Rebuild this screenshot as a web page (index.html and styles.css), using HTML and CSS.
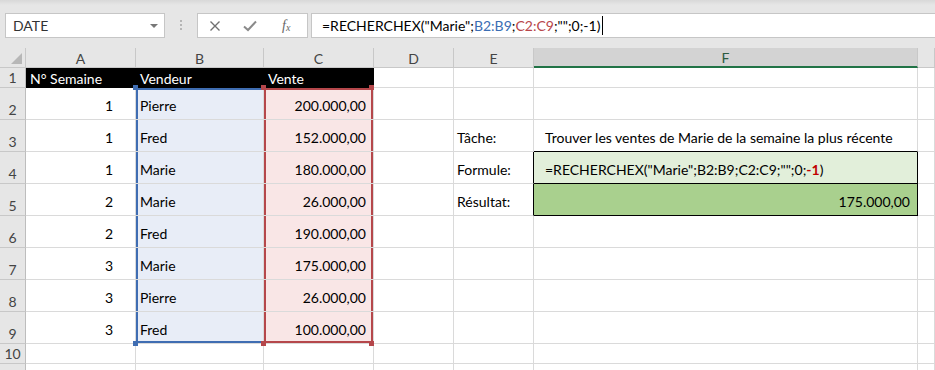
FILE: index.html
```html
<!DOCTYPE html>
<html>
<head>
	<meta charset="utf-8">
	<meta name="viewport" content="width=device-width, initial-scale=1">
	<title>RECHERCHEX - Excel</title>
	<link rel="stylesheet" href="styles.css">
</head>
<body>
	<!-- Formula bar -->
	<div class="formula-bar">
		<div class="name-box">
			<span>DATE</span>
			<span class="drop"></span>
		</div>
		<div class="grip"><i></i><i></i><i></i></div>
		<div class="fx-buttons">
			<svg class="ico x" width="12" height="12" viewBox="0 0 12 12"><path d="M1.5 1.5 L10.5 10.5 M10.5 1.5 L1.5 10.5" stroke="#707070" stroke-width="1.4" fill="none"/></svg>
			<svg class="ico check" width="14" height="12" viewBox="0 0 14 12"><path d="M1 6.5 L5 10 L13 1.5" stroke="#8a8a8a" stroke-width="2" fill="none"/></svg>
			<span class="fx">f<sub>x</sub></span>
		</div>
		<div class="formula-input">
			<span>=RECHERCHEX("Marie";<span class="ref-b">B2:B9</span>;<span class="ref-c">C2:C9</span>;"";0;-1)</span><span class="caret"></span>
		</div>
	</div>

	<!-- Sheet -->
	<table class="sheet">
		<colgroup>
			<col class="w-head">
			<col class="w-a">
			<col class="w-b">
			<col class="w-c">
			<col class="w-d">
			<col class="w-e">
			<col class="w-f">
			<col>
		</colgroup>
		<tr class="h-small">
			<th class="corner"><span class="tri"></span></th>
			<th class="col-head">A</th>
			<th class="col-head">B</th>
			<th class="col-head">C</th>
			<th class="col-head">D</th>
			<th class="col-head">E</th>
			<th class="col-head active">F</th>
			<th class="col-head blank"></th>
		</tr>
		<tr class="h-small">
			<th class="row-head">1</th>
			<td class="title">N° Semaine</td>
			<td class="title">Vendeur</td>
			<td class="title">Vente</td>
			<td></td><td></td><td></td><td></td>
		</tr>
		<tr class="h-big">
			<th class="row-head">2</th>
			<td class="num week">1</td>
			<td class="rng-b top"><span class="handle h-tl blue"></span>Pierre</td>
			<td class="rng-c top num"><span class="handle h-tl red"></span><span class="handle h-tr red"></span>200.000,00</td>
			<td></td><td></td><td></td><td></td>
		</tr>
		<tr class="h-big">
			<th class="row-head">3</th>
			<td class="num week">1</td>
			<td class="rng-b">Fred</td>
			<td class="rng-c num">152.000,00</td>
			<td></td>
			<td class="label">Tâche:</td>
			<td class="task box-top">Trouver les ventes de Marie de la semaine la plus récente</td>
			<td></td>
		</tr>
		<tr class="h-big">
			<th class="row-head">4</th>
			<td class="num week">1</td>
			<td class="rng-b">Marie</td>
			<td class="rng-c num">180.000,00</td>
			<td></td>
			<td class="label box-left">Formule:</td>
			<td class="task formula box">=RECHERCHEX("Marie";B2:B9;C2:C9;"";0;<b>-1</b>)</td>
			<td></td>
		</tr>
		<tr class="h-big">
			<th class="row-head">5</th>
			<td class="num week">2</td>
			<td class="rng-b">Marie</td>
			<td class="rng-c num">26.000,00</td>
			<td></td>
			<td class="label box-left">Résultat:</td>
			<td class="num result box">175.000,00</td>
			<td></td>
		</tr>
		<tr class="h-big">
			<th class="row-head">6</th>
			<td class="num week">2</td>
			<td class="rng-b">Fred</td>
			<td class="rng-c num">190.000,00</td>
			<td></td><td></td><td></td><td></td>
		</tr>
		<tr class="h-big">
			<th class="row-head">7</th>
			<td class="num week">3</td>
			<td class="rng-b">Marie</td>
			<td class="rng-c num">175.000,00</td>
			<td></td><td></td><td></td><td></td>
		</tr>
		<tr class="h-big">
			<th class="row-head">8</th>
			<td class="num week">3</td>
			<td class="rng-b">Pierre</td>
			<td class="rng-c num">26.000,00</td>
			<td></td><td></td><td></td><td></td>
		</tr>
		<tr class="h-big">
			<th class="row-head">9</th>
			<td class="num week">3</td>
			<td class="rng-b bottom"><span class="handle h-bl blue"></span>Fred</td>
			<td class="rng-c bottom num"><span class="handle h-bl red"></span><span class="handle h-br red"></span>100.000,00</td>
			<td></td><td></td><td></td><td></td>
		</tr>
		<tr class="h-small">
			<th class="row-head">10</th>
			<td></td><td></td><td></td><td></td><td></td><td></td><td></td>
		</tr>
		<tr class="h-small">
			<th class="row-head"></th>
			<td></td><td></td><td></td><td></td><td></td><td></td><td></td>
		</tr>
	</table>
</body>
</html>
```

FILE: styles.css
```css
/* General */
* {
	box-sizing: border-box;
}

body {
	margin: 0;
	background: #fff;
	font-family: Lato, "Open Sans", sans-serif;
	overflow: hidden;
}

/* Formula bar */
.formula-bar {
	display: flex;
	align-items: flex-start;
	height: 48px;
	padding: 13px 0 0 5px;
	background: linear-gradient(#d8d8d8, #e6e6e6 5px);
}

.name-box {
	display: flex;
	align-items: center;
	justify-content: space-between;
	width: 160px;
	height: 25px;
	padding: 0 6px 0 7px;
	background: #fff;
	border: 1px solid #c6c6c6;
	font-size: 14px;
	color: #333;
}

.drop {
	border-left: 4px solid transparent;
	border-right: 4px solid transparent;
	border-top: 4px solid #777;
}

.grip {
	display: flex;
	flex-direction: column;
	align-items: center;
	gap: 2px;
	width: 32px;
	padding-top: 7px;
}

.grip i {
	width: 2px;
	height: 2px;
	background: #b5b5b5;
}

.fx-buttons {
	display: flex;
	align-items: center;
	width: 111px;
	height: 25px;
	padding-left: 11px;
	background: #fff;
	border: 1px solid #c6c6c6;
}

.check {
	margin-left: 22px;
}

.fx {
	margin-left: 25px;
	font-family: "Liberation Serif", serif;
	font-style: italic;
	font-size: 14px;
	color: #666;
}

.fx sub {
	font-size: 10px;
	vertical-align: -1px;
}

.formula-input {
	display: flex;
	align-items: center;
	flex: 1;
	height: 25px;
	margin-left: 3px;
	padding-left: 10px;
	background: #fff;
	border: 1px solid #c6c6c6;
	border-right: none;
	font-size: 14px;
	color: #000;
}

.ref-b {
	color: #3a6db3;
}

.ref-c {
	color: #b8464a;
}

.caret {
	width: 1px;
	height: 19px;
	margin-left: 2px;
	background: #000;
}

/* Sheet */
.sheet {
	width: 935px;
	table-layout: fixed;
	border-collapse: separate;
	border-spacing: 0;
	font-size: 14px;
}

.w-head { width: 26px; }
.w-a { width: 110px; }
.w-b { width: 128px; }
.w-c { width: 110px; }
.w-d { width: 80px; }
.w-e { width: 80px; }
.w-f { width: 384px; }

.h-small { height: 20px; }
.h-big { height: 32px; }

th, td {
	padding: 0 4px;
	border-right: 1px solid #dadada;
	border-bottom: 1px solid #dadada;
	white-space: nowrap;
	overflow: visible;
}

td {
	position: relative;
	padding-top: 4px;
	color: #000;
	text-align: left;
	vertical-align: middle;
}

/* Headers */
.corner, .col-head, .row-head {
	background: #e6e6e6;
	font-weight: normal;
	font-size: 14px;
	color: #444;
	border-color: #c8c8c8;
}

.col-head {
	padding-top: 1px;
	text-align: center;
}

.col-head.active {
	background: #d3d3d3;
	color: #2c5a3f;
	border-bottom: 2px solid #217346;
}

.corner {
	position: relative;
	padding: 0;
}

.tri {
	position: absolute;
	right: 3px;
	bottom: 3px;
	border-left: 11px solid transparent;
	border-bottom: 11px solid #b7b7b7;
}

.row-head {
	padding: 0;
	text-align: center;
	vertical-align: bottom;
	border-right-color: #bdbdbd;
	line-height: 19px;
}

/* Cells */
.title {
	background: #000;
	color: #fff;
	border-color: #000;
	padding-top: 1px;
}

.num {
	text-align: right;
	padding-right: 7px;
}

.week {
	padding-right: 22px;
}

.rng-b {
	background: #e8edf7;
	box-shadow: inset 2px 0 #3f6db2;
}

.rng-b.top { box-shadow: inset 2px 0 #3f6db2, inset 0 2px #3f6db2; }
.rng-b.bottom { box-shadow: inset 2px 0 #3f6db2, inset 0 -2px #3f6db2; }

.rng-c {
	background: #f9e6e6;
	box-shadow: inset 2px 0 #b5474b, inset -2px 0 #b5474b;
}

.rng-c.top { box-shadow: inset 2px 0 #b5474b, inset -2px 0 #b5474b, inset 0 2px #b5474b; }
.rng-c.bottom { box-shadow: inset 2px 0 #b5474b, inset -2px 0 #b5474b, inset 0 -2px #b5474b; }

.handle {
	position: absolute;
	width: 5px;
	height: 5px;
	z-index: 2;
}

.handle.blue { background: #3f6db2; }
.handle.red { background: #b5474b; }

.h-tl { left: -3px; top: -3px; }
.h-tr { right: -1px; top: -3px; }
.h-bl { left: -3px; bottom: -3px; }
.h-br { right: -1px; bottom: -3px; }

.label {
	padding-left: 3px;
}

.task {
	padding-left: 11px;
}

.box-top { border-bottom-color: #000; }
.box-left { border-right-color: #000; }

.box {
	border-right-color: #000;
	border-bottom-color: #000;
}

.formula {
	background: #e2efda;
}

.formula b {
	color: #c00000;
}

.result {
	background: #a9d08e;
}
```
